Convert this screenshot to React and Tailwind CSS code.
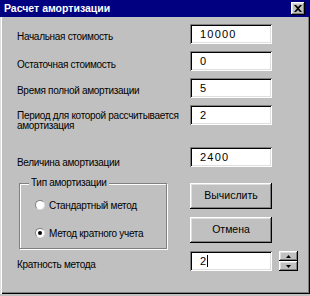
import React from "react";

const FONT = { fontFamily: '"Liberation Sans", Arial, sans-serif' };

const sunken =
  "bg-white shadow-[inset_1px_1px_0_#808080,inset_-1px_-1px_0_#ffffff,inset_2px_2px_0_#000000,inset_-2px_-2px_0_#dfdfdf]";
const raised =
  "bg-[#c0c0c0] shadow-[inset_-1px_-1px_0_#000000,inset_1px_1px_0_#ffffff,inset_-2px_-2px_0_#808080,inset_2px_2px_0_#dfdfdf]";

function Field({ value, cursor }) {
  return (
    <div className={`w-[82px] h-[20px] ${sunken} flex items-center pl-[10px] text-[11px] tracking-[1.2px] text-black`}>
      <span>{value}</span>
      {cursor && <span className="w-[1px] h-[12px] bg-black" />}
    </div>
  );
}

function Row({ label, value, className = "", labelPad = "pt-[4px]" }) {
  return (
    <div className={`flex items-center h-[20px] ${className}`}>
      <div className={`w-[190px] pl-[17px] ${labelPad} text-[10px] tracking-[-0.3px] text-black`}>{label}</div>
      <Field value={value} />
    </div>
  );
}

function Radio({ checked, label }) {
  return (
    <div className="flex items-center h-[14px]">
      <span className="w-[10px] h-[10px] rounded-full bg-white border border-t-[#808080] border-l-[#808080] border-b-[#dfdfdf] border-r-[#dfdfdf] flex items-center justify-center ml-[15px]">
        {checked && <span className="w-[4px] h-[4px] rounded-full bg-black" />}
      </span>
      <span className="ml-[4px] text-[10px] tracking-[-0.3px] text-black">{label}</span>
    </div>
  );
}

export default function App() {
  return (
    <div className="w-[310px] h-[296px] bg-[#c0c0c0] overflow-hidden" style={FONT}>
      <div className="w-[310px] h-[294px] bg-[#c0c0c0] shadow-[inset_1px_0_0_#dfdfdf,inset_2px_0_0_#ffffff,inset_-1px_-1px_0_#000000,inset_-2px_-2px_0_#808080] flex flex-col">
        <div className="h-[17px] bg-[#000080] flex items-center justify-between pl-[4px] pr-[5px]">
          <span className="text-white text-[10.5px] font-bold leading-none">Расчет амортизации</span>
          <button className={`w-[14px] h-[13px] ${raised} flex items-center justify-center`}>
            <svg width="8" height="7" viewBox="0 0 8 7">
              <path d="M0 0h2l2 2 2-2h2L5 3.5 8 7H6L4 5 2 7H0l3-3.5z" fill="#000" />
            </svg>
          </button>
        </div>

        <Row label="Начальная стоимость" value="10000" className="mt-[7px]" />
        <Row label="Остаточная стоимость" value="0" className="mt-[7px]" labelPad="pt-[6px]" />
        <Row label="Время полной амортизации" value="5" className="mt-[7px]" />
        <div className="flex items-start h-[20px] mt-[7px]">
          <div className="w-[190px] pl-[17px] pt-[6px] text-[10px] tracking-[-0.3px] leading-[10px] text-black">
            Период для которой рассчитывается
            <br />
            амортизация
          </div>
          <Field value="2" />
        </div>
        <Row label="Величина амортизации" value="2400" className="mt-[22px]" labelPad="pt-[10px]" />

        <div className="flex mt-[16px]">
          <div className="w-[190px] flex flex-col">
            <div className="relative ml-[19px] w-[148px] h-[66px] border border-[#808080] shadow-[1px_1px_0_#ffffff,inset_1px_1px_0_#ffffff] flex flex-col pt-[14px] gap-[14px]">
              <span className="absolute left-[9px] top-[-7px] bg-[#c0c0c0] px-[2px] text-[10px] tracking-[-0.3px] leading-[12px] text-black">
                Тип амортизации
              </span>
              <Radio label="Стандартный метод" />
              <Radio checked label="Метод кратного учета" />
            </div>
            <div className="pl-[17px] mt-[8px] text-[10px] tracking-[-0.3px] text-black">Кратность метода</div>
          </div>
          <div className="flex flex-col gap-[8px]">
            <button className={`w-[82px] h-[26px] ${raised} text-[10.5px] text-black`}>Вычислить</button>
            <button className={`w-[82px] h-[26px] ${raised} text-[10.5px] text-black`}>Отмена</button>
            <div className="flex items-center">
              <Field value="2" cursor />
              <div className="ml-[7px] flex flex-col">
                <div className={`w-[19px] h-[10px] ${raised} flex items-center justify-center`}>
                  <svg width="5" height="3" viewBox="0 0 5 3">
                    <path d="M2.5 0L5 3H0z" fill="#000" />
                  </svg>
                </div>
                <div className={`w-[19px] h-[10px] ${raised} flex items-center justify-center`}>
                  <svg width="5" height="3" viewBox="0 0 5 3">
                    <path d="M0 0h5L2.5 3z" fill="#000" />
                  </svg>
                </div>
              </div>
            </div>
          </div>
        </div>
      </div>
    </div>
  );
}
